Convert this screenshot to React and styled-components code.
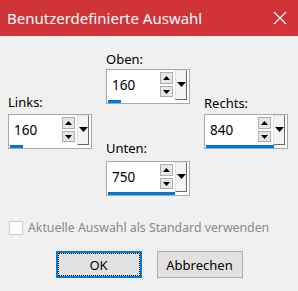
import React from "react";
import styled, { createGlobalStyle } from "styled-components";

const GlobalStyle = createGlobalStyle`
  body {
    margin: 0;
    background: #f0f0f0;
    font-family: "Noto Sans", "Liberation Sans", sans-serif;
  }
`;

const Window = styled.div`
  width: 298px;
  height: 291px;
  background: #f0f0f0;
  display: flex;
  flex-direction: column;
  overflow: hidden;
`;

const TitleBar = styled.div`
  height: 36px;
  background: #d13438;
  color: #fff;
  display: flex;
  align-items: center;
  justify-content: space-between;
  padding: 0 11px 0 7px;
  font-size: 15px;
`;

const CloseIcon = () => (
  <svg width="14" height="14" viewBox="0 0 14 14">
    <path d="M1 1 L13 13 M13 1 L1 13" stroke="#fff" strokeWidth="1.2" />
  </svg>
);

const SpinArea = styled.div`
  display: grid;
  grid-template-columns: 84px 84px 84px;
  column-gap: 14px;
  padding: 0 0 0 8px;
`;

const Column = styled.div`
  display: flex;
  flex-direction: column;
  padding-top: ${(p) => p.$top}px;
  gap: ${(p) => p.$gap || 0}px;
`;

const Label = styled.div`
  font-size: 13px;
  line-height: 16px;
  color: #000;
`;

const Box = styled.div`
  margin-top: ${(p) => p.$mt}px;
  width: 84px;
  height: 35px;
  box-sizing: border-box;
  border: 1px solid #a9a9a9;
  background: #fff;
  display: flex;
  flex-direction: column;
`;

const BoxRow = styled.div`
  display: flex;
  align-items: flex-start;
  height: 30px;
`;

const Value = styled.div`
  flex: 1;
  font-size: 13.5px;
  line-height: 30px;
  padding-left: 5px;
  color: #000;
`;

const SpinCol = styled.div`
  display: flex;
  flex-direction: column;
  gap: 2px;
  margin-top: 2px;
`;

const SpinBtn = styled.div`
  width: 13px;
  height: ${(p) => p.$h}px;
  box-sizing: border-box;
  border: 1px solid #adadad;
  background: #e6e6e6;
  display: flex;
  align-items: center;
  justify-content: center;
`;

const DropBtn = styled.div`
  width: 12px;
  height: 30px;
  margin: 0 2px 0 2px;
  box-sizing: border-box;
  background: #f4f4f4;
  border-left: 1px solid #e3e3e3;
  border-top: 1px solid #e3e3e3;
  border-right: 1px solid #6a6a6a;
  border-bottom: 1px solid #6a6a6a;
  display: flex;
  justify-content: center;
  padding-top: 11px;
`;

const Bar = styled.div`
  height: 3px;
  margin-left: 1px;
  background: #0078d7;
`;

const ArrowUp = () => (
  <svg width="7" height="4" viewBox="0 0 7 4">
    <path d="M0 4 L3.5 0 L7 4 Z" fill="#000" />
  </svg>
);

const ArrowDown = ({ w = 7 }) => (
  <svg width={w} height={w / 2 + 0.5} viewBox="0 0 7 4">
    <path d="M0 0 L7 0 L3.5 4 Z" fill="#000" />
  </svg>
);

const CheckRow = styled.label`
  display: flex;
  align-items: center;
  gap: 5px;
  margin: 23px 0 0 9px;
  font-size: 12.3px;
  color: #8a8a8a;
`;

const CheckBox = styled.span`
  width: 14px;
  height: 14px;
  box-sizing: border-box;
  border: 1px solid #cccccc;
  background: #fff;
`;

const ButtonRow = styled.div`
  display: flex;
  justify-content: center;
  gap: 15px;
  margin-top: 15px;
`;

const Button = styled.button`
  position: relative;
  width: 86px;
  height: 27px;
  box-sizing: border-box;
  background: #e1e1e1;
  border: 1px solid ${(p) => (p.$primary ? "#0078d7" : "#adadad")};
  box-shadow: ${(p) => (p.$primary ? "inset 0 0 0 1px #0078d7" : "none")};
  font-family: inherit;
  font-size: 13px;
  color: #000;
  padding: 0;
  &::after {
    content: "";
    display: ${(p) => (p.$primary ? "block" : "none")};
    position: absolute;
    inset: 1px;
    border: 1px dotted #000;
  }
`;

function Spinner({ label, value, bar, mt = 3 }) {
  return (
    <div>
      <Label>{label}</Label>
      <Box $mt={mt}>
        <BoxRow>
          <Value>{value}</Value>
          <SpinCol>
            <SpinBtn $h={12}>
              <ArrowUp />
            </SpinBtn>
            <SpinBtn $h={11}>
              <ArrowDown />
            </SpinBtn>
          </SpinCol>
          <DropBtn>
            <ArrowDown w={9} />
          </DropBtn>
        </BoxRow>
        <Bar style={{ width: bar }} />
      </Box>
    </div>
  );
}

export default function App() {
  return (
    <Window>
      <GlobalStyle />
      <TitleBar>
        <span>Benutzerdefinierte Auswahl</span>
        <CloseIcon />
      </TitleBar>
      <SpinArea>
        <Column $top={58}>
          <Spinner label="Links:" value="160" bar={13} mt={4} />
        </Column>
        <Column $top={15} $gap={36}>
          <Spinner label="Oben:" value="160" bar={13} mt={2} />
          <Spinner label="Unten:" value="750" bar={67} mt={5} />
        </Column>
        <Column $top={59}>
          <Spinner label="Rechts:" value="840" bar={68} mt={3} />
        </Column>
      </SpinArea>
      <CheckRow>
        <CheckBox />
        Aktuelle Auswahl als Standard verwenden
      </CheckRow>
      <ButtonRow>
        <Button $primary>OK</Button>
        <Button>Abbrechen</Button>
      </ButtonRow>
    </Window>
  );
}
